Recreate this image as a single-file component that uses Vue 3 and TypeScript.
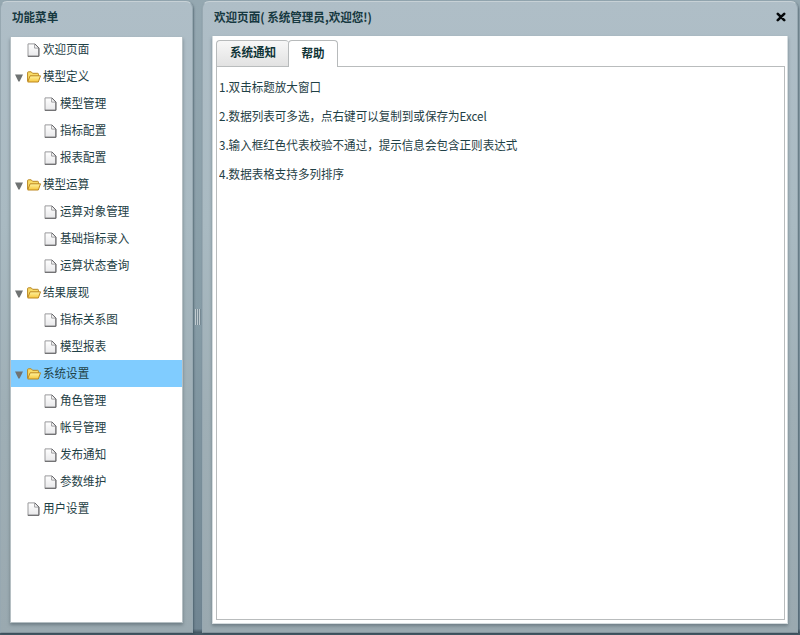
<script setup lang="ts">
import { ref } from 'vue'

interface MenuItem {
  label: string
  kind: 'page' | 'folder'
  level: number
}

const items: MenuItem[] = [
  { label: '欢迎页面', kind: 'page', level: 0 },
  { label: '模型定义', kind: 'folder', level: 0 },
  { label: '模型管理', kind: 'page', level: 1 },
  { label: '指标配置', kind: 'page', level: 1 },
  { label: '报表配置', kind: 'page', level: 1 },
  { label: '模型运算', kind: 'folder', level: 0 },
  { label: '运算对象管理', kind: 'page', level: 1 },
  { label: '基础指标录入', kind: 'page', level: 1 },
  { label: '运算状态查询', kind: 'page', level: 1 },
  { label: '结果展现', kind: 'folder', level: 0 },
  { label: '指标关系图', kind: 'page', level: 1 },
  { label: '模型报表', kind: 'page', level: 1 },
  { label: '系统设置', kind: 'folder', level: 0 },
  { label: '角色管理', kind: 'page', level: 1 },
  { label: '帐号管理', kind: 'page', level: 1 },
  { label: '发布通知', kind: 'page', level: 1 },
  { label: '参数维护', kind: 'page', level: 1 },
  { label: '用户设置', kind: 'page', level: 0 },
]
const selected = ref('系统设置')

const help: string[] = [
  '1.双击标题放大窗口',
  '2.数据列表可多选，点右键可以复制到或保存为Excel',
  '3.输入框红色代表校验不通过，提示信息会包含正则表达式',
  '4.数据表格支持多列排序',
]
</script>

<template>
  <div class="app">
    <svg class="defs" width="0" height="0">
      <defs>
        <linearGradient id="pageFill" x1="0" y1="0" x2="0" y2="1">
          <stop offset="0" stop-color="#ffffff" />
          <stop offset="1" stop-color="#e8e8ea" />
        </linearGradient>
        <linearGradient id="folderFill" x1="0" y1="0" x2="0" y2="1">
          <stop offset="0" stop-color="#fff3a0" />
          <stop offset="1" stop-color="#f6c63c" />
        </linearGradient>
      </defs>
    </svg>

    <aside class="panel menu">
      <header class="title"><span class="tall">功能菜单</span></header>
      <ul class="tree">
        <li
          v-for="item in items"
          :key="item.label"
          class="row"
          :class="{ child: item.level === 1, active: item.label === selected }"
          @click="selected = item.label"
        >
          <span class="toggle">
            <svg v-if="item.kind === 'folder'" width="8" height="8" viewBox="0 0 8 8">
              <path d="M0 0.4H8L4.6 7.6H3.4Z" fill="#6f7373" />
            </svg>
          </span>
          <svg v-if="item.kind === 'folder'" class="icon" width="16" height="14" viewBox="0 0 16 14">
            <path d="M1.6 11V2.6Q1.6 1.8 2.4 1.8H5.2L6.6 3.3H11.6Q12.4 3.3 12.4 4.1V6" fill="#f9dc68" stroke="#b98722" />
            <path d="M1.7 12L4.1 5.8H14.5L12.3 12Z" fill="url(#folderFill)" stroke="#bd8820" stroke-linejoin="round" />
          </svg>
          <svg v-else class="icon" width="16" height="14" viewBox="0 0 16 14">
            <path d="M2 0.9H8.8L12.9 5V13.2H2Z" fill="url(#pageFill)" stroke="#9a9a9c" />
            <path d="M8.8 0.9L12.9 5V13.3H1.8" fill="none" stroke="#626265" />
            <path d="M8.6 1.2V5.1H12.6" fill="none" stroke="#8a8a8d" stroke-width="0.8" />
          </svg>
          <span class="label tall">{{ item.label }}</span>
        </li>
      </ul>
    </aside>

    <div class="divider">
      <div class="grip"><i></i><i></i><i></i></div>
    </div>

    <main class="panel page">
      <header class="title">
        <span class="tall">欢迎页面( 系统管理员,欢迎您!)</span>
        <svg class="close" width="10" height="10" viewBox="0 0 10 10">
          <path d="M1.8 1.8L8.2 8.2M8.2 1.8L1.8 8.2" stroke="#05080a" stroke-width="2.6" stroke-linecap="round" />
        </svg>
      </header>
      <section class="content">
        <nav class="tabs">
          <div class="tab first"><span class="tall">系统通知</span></div>
          <div class="tab current"><span class="tall">帮助</span></div>
        </nav>
        <div class="body">
          <p v-for="line in help" :key="line" class="tall">{{ line }}</p>
        </div>
      </section>
    </main>
  </div>
</template>

<style>
body {
  overflow: hidden;
}
</style>

<style scoped>
.app {
  box-sizing: border-box;
  display: flex;
  width: 800px;
  height: 635px;
  padding: 1px 2px 2px 0;
  background: linear-gradient(#95a8b1, #869ca6 50%, #708592 99%, #465a66 99.6%);
  font-family: "Noto Sans CJK SC", sans-serif;
  font-size: 11.55px;
  color: #1f4146;
}
.defs {
  position: absolute;
}
.tall {
  display: block;
  transform: scaleY(1.07);
}
.panel {
  box-sizing: border-box;
  display: flex;
  flex-direction: column;
  border: 1px solid #97a8b1;
  border-top-color: #c7d1d6;
  border-bottom-color: #84949d;
  border-radius: 7px 7px 0 0;
  background: linear-gradient(#afbec7, #a9bac2 35%, #9fafb6 65%, #9aa9b0);
  box-shadow: 1px 1px 2px rgba(45, 65, 78, 0.5);
}
.menu {
  width: 193px;
  padding: 0 9px 9px 9px;
}
.page {
  width: 596px;
  padding: 0 9px 8px 9px;
}
.title {
  display: flex;
  flex: none;
  align-items: center;
  justify-content: space-between;
  height: 35px;
  padding: 0 3px 5px 2px;
  box-sizing: border-box;
  font-weight: 700;
  color: #163840;
}
.page .title {
  height: 34px;
  padding-bottom: 4px;
}
.close {
  margin-right: -1px;
}
.tree {
  flex: 1;
  margin: 0;
  padding: 0;
  list-style: none;
  border: 1px solid #b5bfc3;
  border-top: 0;
  background: #fff;
  box-shadow: 0 2px 3px rgba(70, 85, 94, 0.5);
}
.row {
  display: flex;
  align-items: center;
  height: 27px;
  padding-left: 4px;
}
.row:first-child {
  height: 25px;
  padding-bottom: 1px;
}
.row.child {
  padding-left: 21px;
}
.row.active {
  background: #80ccff;
}
.toggle {
  display: flex;
  width: 11px;
  padding-top: 2px;
}
.icon {
  flex: none;
  margin-top: 1px;
}
.row.child .icon {
  margin-left: -0.5px;
  margin-right: 0.5px;
}
.label {
  margin-left: 1px;
  line-height: 18px;
  padding-bottom: 1px;
}
.divider {
  display: flex;
  align-items: center;
  justify-content: center;
  width: 9px;
}
.grip {
  display: flex;
  height: 16px;
}
.grip i {
  width: 1px;
  background: #c0cbd0;
  border-right: 1px solid #768993;
}
.content {
  display: flex;
  flex: 1;
  flex-direction: column;
  padding: 4px 2px 3px 3px;
  border: 1px solid #d5dcdf;
  border-top: 0;
  background: #fff;
  box-shadow: 0 2px 3px rgba(70, 85, 94, 0.5);
}
.tabs {
  display: flex;
  height: 26px;
  z-index: 1;
}
.tab {
  box-sizing: border-box;
  height: 26px;
  border: 1px solid #b7babb;
  border-radius: 4px 4px 0 0;
  line-height: 23px;
  text-align: center;
  font-weight: 700;
  color: #0f3436;
}
.tab.first {
  width: 73px;
  background: linear-gradient(#f7f7f7, #e2e2e2);
  border-right: 0;
  border-bottom: 0;
}
.tab.current {
  width: 50px;
  height: 27px;
  margin-left: -1px;
  line-height: 25px;
  border-bottom: 0;
  background: #fff;
}
.body {
  flex: 1;
  border: 1px solid #b9bcbd;
  padding: 6px 2px;
}
.body p {
  margin: 0;
  line-height: 29px;
}
</style>
